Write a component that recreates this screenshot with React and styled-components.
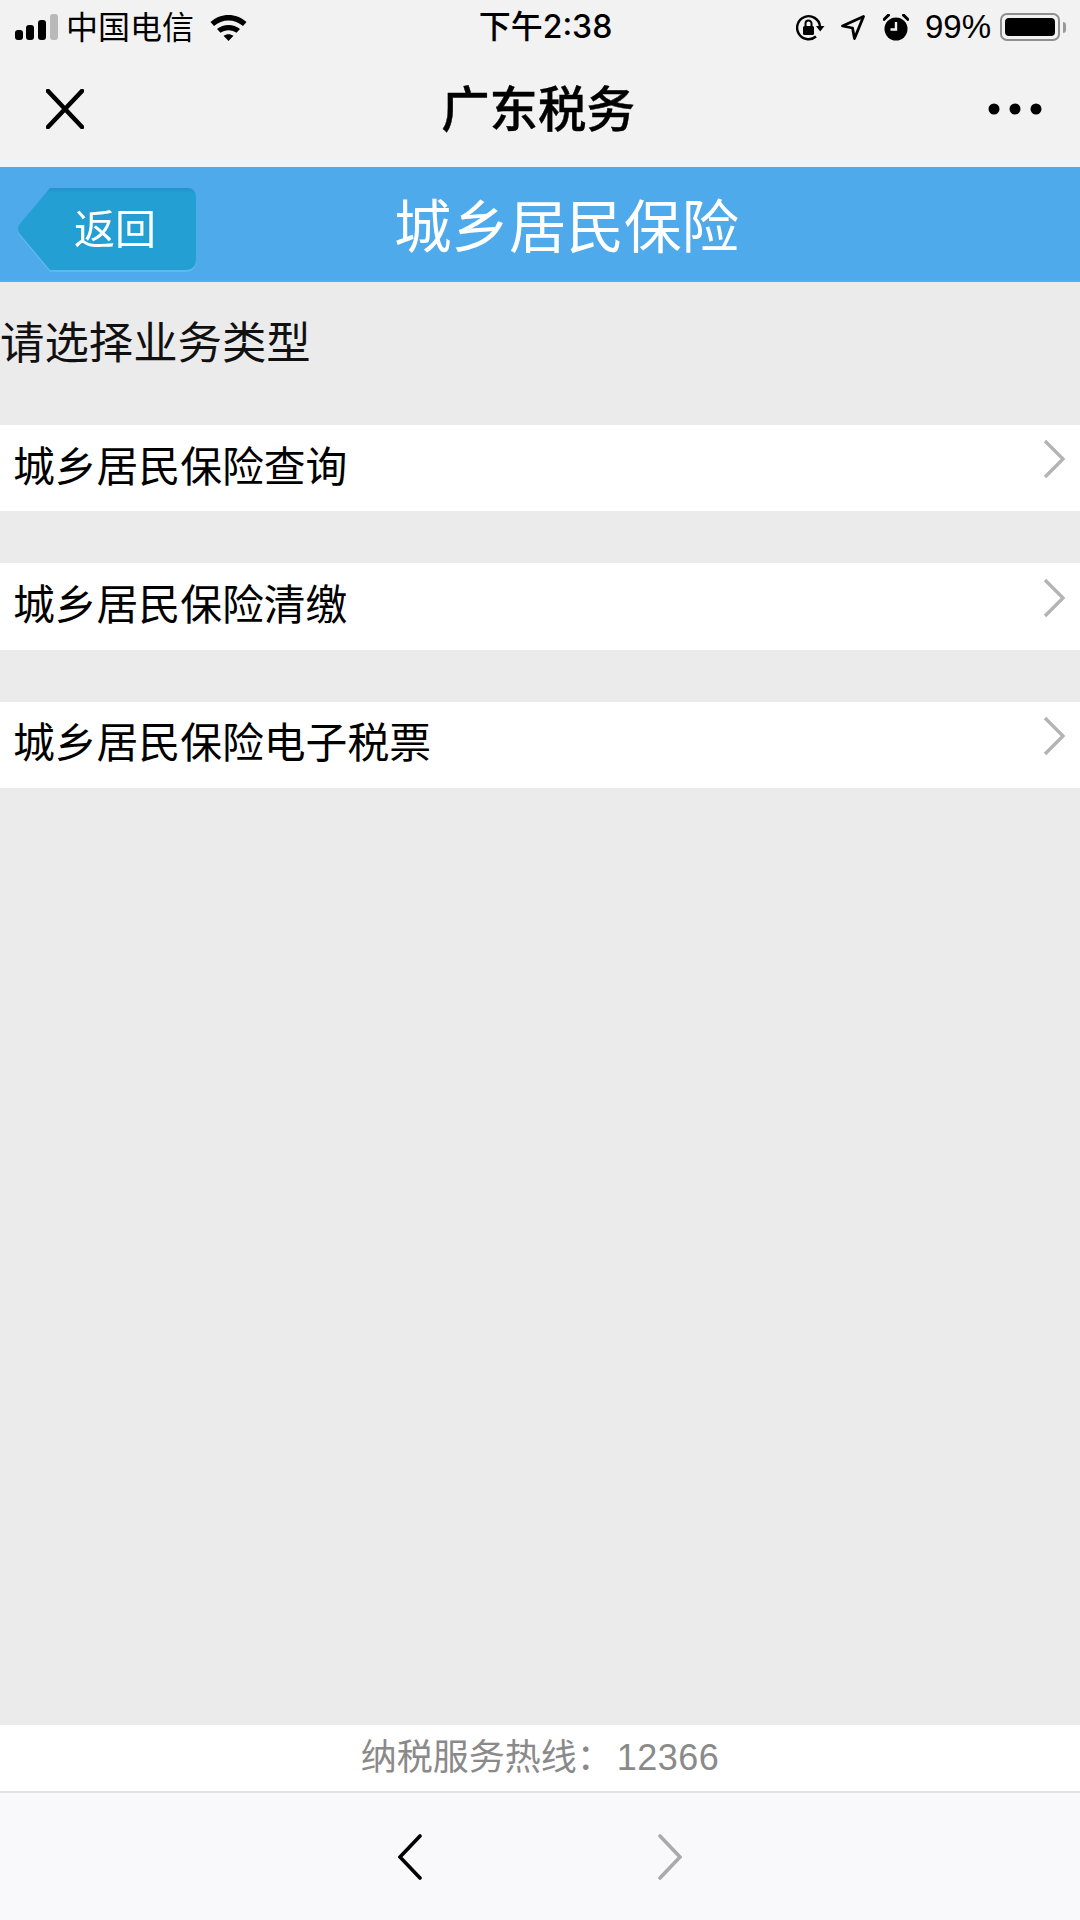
import React from 'react';
import styled, { createGlobalStyle } from 'styled-components';

const CJK = '"Noto Sans CJK SC", sans-serif';

const GlobalStyle = createGlobalStyle`
  html, body {
    margin: 0;
    padding: 0;
    background: #ebebeb;
  }
  * {
    box-sizing: border-box;
  }
`;

const Page = styled.div`
  width: 1080px;
  height: 1920px;
  display: flex;
  flex-direction: column;
  background: #ebebeb;
  font-family: ${CJK};
  overflow: hidden;
`;

const StatusBar = styled.div`
  height: 54px;
  padding: 0 14px 0 15px;
  display: grid;
  grid-template-columns: 1fr auto 1fr;
  align-items: center;
  background: #f2f2f2;
  color: #000;
`;

const StatusLeft = styled.div`
  display: flex;
  align-items: center;
`;

const StatusRight = styled.div`
  display: flex;
  align-items: center;
  justify-content: flex-end;
`;

const Carrier = styled.span`
  margin: 0 15px 0 7px;
  padding-bottom: 3px;
  font-size: 32px;
  line-height: 51px;
`;

const Clock = styled.span`
  margin-left: 10px;
  font-family: Inter, ${CJK};
  font-size: 32px;
  font-weight: 500;
  line-height: 54px;
`;

const Percent = styled.span`
  margin: 0 9px 0 16px;
  font-family: "Liberation Sans", sans-serif;
  font-size: 33px;
  line-height: 54px;
`;

const StatusIcon = styled.svg`
  display: block;
  flex: none;
  margin-left: ${p => p.$gap || 0}px;
`;

const Battery = styled.div`
  width: 60px;
  height: 28px;
  padding: 3px;
  border: 2px solid #8f8f8f;
  border-radius: 7px;
  &::before {
    content: '';
    display: block;
    height: 100%;
    background: #000;
    border-radius: 4px;
  }
`;

const BatteryNub = styled.div`
  width: 3px;
  height: 11px;
  margin-left: 3px;
  background: #9a9a9a;
  border-radius: 0 3px 3px 0;
`;

const NavBar = styled.div`
  height: 113px;
  padding: 0 38px 3px 46px;
  display: flex;
  align-items: center;
  justify-content: space-between;
  background: #f2f2f2;
`;

const NavTitle = styled.div`
  margin: 0 0 7px 4px;
  font-size: 48.4px;
  font-weight: 500;
  color: #000;
  line-height: 60px;
  -webkit-text-stroke: 0.4px #000;
`;

const Header = styled.div`
  height: 115px;
  padding: 21px 0 0 17px;
  display: flex;
  align-items: flex-start;
  background: #4eaaea;
  border-bottom: 2px solid #45b4ef;
`;

const BackButton = styled.div`
  flex: none;
  filter: drop-shadow(0 2px 0 #5fb9ee);
`;

const BackFace = styled.div`
  width: 180px;
  height: 82px;
  padding: 0 0 6px 16px;
  display: flex;
  align-items: center;
  justify-content: center;
  color: #fff;
  font-size: 41px;
  background: linear-gradient(#1f93c8 0, #239fd3 5px);
  clip-path: path('M33 0 H170 Q179 0 179 9 V71 Q179 82 168 82 H33 L2 45 Q0 41 2 37 Z');
`;

const HeaderTitle = styled.div`
  width: 739px;
  margin-top: 1px;
  text-align: center;
  color: #fff;
  font-size: 57.5px;
  line-height: 68px;
`;

const Prompt = styled.div`
  height: 143px;
  padding: 27px 0 0;
  font-size: 44.4px;
  line-height: 62px;
  color: #111;
`;

const Rows = styled.div`
  display: flex;
  flex-direction: column;
  gap: 52px;
`;

const Row = styled.div`
  height: 86.4px;
  padding: 0 14px 9px 13px;
  display: flex;
  align-items: center;
  justify-content: space-between;
  background: #fff;
  color: #000;
  font-size: 41.8px;
`;

const RowChevron = styled.svg`
  display: block;
  margin-bottom: 9px;
`;

const Spacer = styled.div`
  flex: 1;
`;

const Hotline = styled.div`
  height: 68px;
  padding-bottom: 1px;
  line-height: 65px;
  text-align: center;
  background: #fff;
  border-bottom: 2px solid #e2e2e2;
  color: #8a8a8a;
  font-family: "Liberation Sans", ${CJK};
  font-size: 36px;
`;

const HotlineNumber = styled.span`
  margin-left: 4px;
  letter-spacing: 0.5px;
`;

const Toolbar = styled.div`
  height: 127px;
  display: flex;
  align-items: center;
  justify-content: center;
  gap: 236px;
  background: #f9f9fb;
`;

const App = () => {
  return (
    <Page>
      <GlobalStyle />
      <StatusBar>
        <StatusLeft>
          <svg width="44" height="27" viewBox="0 0 44 27">
            <rect x="0" y="16" width="8" height="10" rx="3" fill="#000" />
            <rect x="11" y="11" width="8" height="15" rx="3" fill="#000" />
            <rect x="23" y="6" width="8" height="20" rx="3" fill="#000" />
            <rect x="35" y="0" width="8" height="26" rx="3" fill="#b9b9b9" />
          </svg>
          <Carrier>中国电信</Carrier>
          <svg width="39" height="27" viewBox="0 0 37 27">
            <path d="M0.5 8 C10.5 -1.5 26.5 -1.5 36.5 8 L33 12 C25 4.5 12 4.5 4 12 Z" fill="#000" />
            <path d="M7 15 C13.5 9.5 23.5 9.5 30 15 L26.5 18.8 C22 15.3 15 15.3 10.5 18.8 Z" fill="#000" />
            <path d="M13.5 21.7 C16.5 19.6 20.5 19.6 23.5 21.7 L18.5 27 Z" fill="#000" />
          </svg>
        </StatusLeft>
        <Clock>下午2:38</Clock>
        <StatusRight>
          <svg width="29" height="27" viewBox="0 0 29 27">
            <path d="M20 22.5 A11.5 11.5 0 1 1 24 12" fill="none" stroke="#000" strokeWidth="2.4" />
            <path d="M20 12 L28.5 12 L24.2 17.5 Z" fill="#000" />
            <rect x="7" y="12" width="11" height="9" rx="1.5" fill="#000" />
            <path d="M9.5 12 V9.5 A3 3 0 0 1 15.5 9.5 V12" fill="none" stroke="#000" strokeWidth="2" />
          </svg>
          <StatusIcon $gap={16} width="24" height="25" viewBox="0 0 24 25">
            <path d="M22.5 1.5 L1.5 11 L11.5 13 L13.5 23.5 Z" fill="none" stroke="#000" strokeWidth="2.8" strokeLinejoin="round" />
          </StatusIcon>
          <StatusIcon $gap={18} width="26" height="27" viewBox="0 0 26 27">
            <circle cx="13" cy="15" r="11.5" fill="#000" />
            <path d="M13 8 V15.5 H7.5" fill="none" stroke="#f2f2f2" strokeWidth="2.4" />
            <path d="M1 5.5 L5.5 1.2" stroke="#000" strokeWidth="3" strokeLinecap="round" />
            <path d="M25 5.5 L20.5 1.2" stroke="#000" strokeWidth="3" strokeLinecap="round" />
          </StatusIcon>
          <Percent>99%</Percent>
          <Battery />
          <BatteryNub />
        </StatusRight>
      </StatusBar>

      <NavBar>
        <svg width="38" height="40" viewBox="0 0 38 40">
          <path d="M2 2 L36 38 M36 2 L2 38" stroke="#000" strokeWidth="4.6" strokeLinecap="round" />
        </svg>
        <NavTitle>广东税务</NavTitle>
        <svg width="54" height="12" viewBox="0 0 54 12">
          <circle cx="6" cy="6" r="5.5" fill="#000" />
          <circle cx="27" cy="6" r="5.5" fill="#000" />
          <circle cx="48" cy="6" r="5.5" fill="#000" />
        </svg>
      </NavBar>

      <Header>
        <BackButton>
          <BackFace>返回</BackFace>
        </BackButton>
        <HeaderTitle>城乡居民保险</HeaderTitle>
      </Header>

      <Prompt>请选择业务类型</Prompt>

      <Rows>
        {['城乡居民保险查询', '城乡居民保险清缴', '城乡居民保险电子税票'].map(label => (
          <Row key={label}>
            <span>{label}</span>
            <RowChevron width="24" height="40" viewBox="0 0 24 40">
              <path d="M3 2 L21 20 L3 38" fill="none" stroke="#b4b4b4" strokeWidth="3.4" />
            </RowChevron>
          </Row>
        ))}
      </Rows>

      <Spacer />

      <Hotline>
        纳税服务热线：<HotlineNumber>12366</HotlineNumber>
      </Hotline>

      <Toolbar>
        <svg width="24" height="46" viewBox="0 0 24 46">
          <path d="M22 2 L2 23 L22 44" fill="none" stroke="#000" strokeWidth="3.6" strokeLinecap="round" />
        </svg>
        <svg width="24" height="46" viewBox="0 0 24 46">
          <path d="M2 2 L22 23 L2 44" fill="none" stroke="#aaaaaa" strokeWidth="3.6" strokeLinecap="round" />
        </svg>
      </Toolbar>
    </Page>
  );
};

export default App;
